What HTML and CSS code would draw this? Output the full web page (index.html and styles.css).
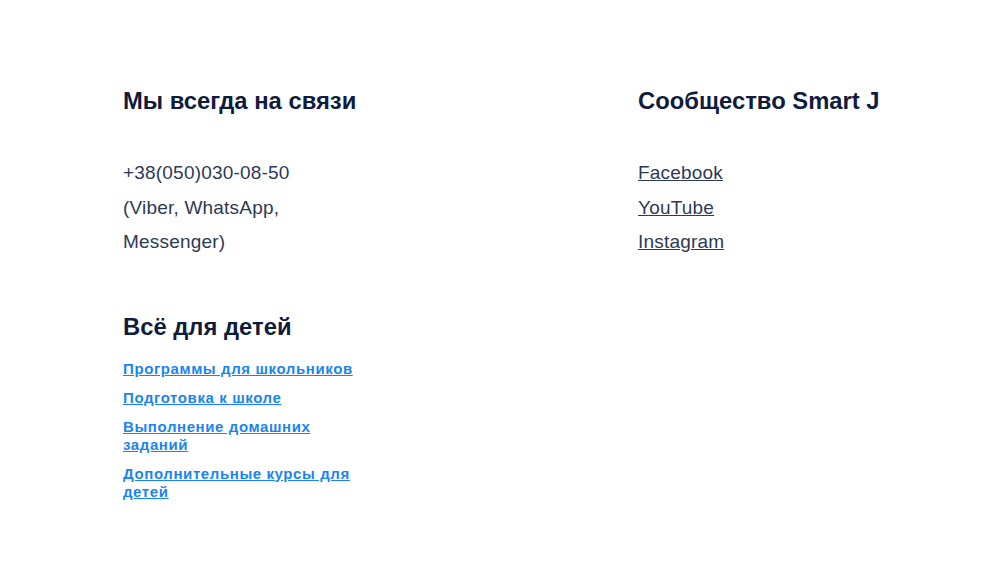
FILE: index.html
```html
<!DOCTYPE html>
<html lang="ru">
<head>
    <meta charset="UTF-8">
    <title>Контакты</title>
    <link rel="stylesheet" href="styles.css">
</head>
<body>
    <footer class="footer">
        <section class="footer-col">
            <h3 class="footer-title">Мы всегда на связи</h3>
            <p class="contact-text">+38(050)030-08-50<br>(Viber, WhatsApp, Messenger)</p>

            <h3 class="footer-title kids-title">Всё для детей</h3>
            <ul class="kids-links">
                <li><a href="#">Программы для школьников</a></li>
                <li><a href="#">Подготовка к школе</a></li>
                <li><a href="#">Выполнение домашних заданий</a></li>
                <li><a href="#">Дополнительные курсы для детей</a></li>
            </ul>
        </section>

        <section class="footer-col">
            <h3 class="footer-title">Сообщество Smart J</h3>
            <ul class="social-links">
                <li><a href="#">Facebook</a></li>
                <li><a href="#">YouTube</a></li>
                <li><a href="#">Instagram</a></li>
            </ul>
        </section>
    </footer>
</body>
</html>
```

FILE: styles.css
```css
/* Global */
body {
    margin: 0;
    background-color: #fff;
    font-family: 'Liberation Sans', Arial, sans-serif;
    color: #2d3a55;
}

.footer {
    display: flex;
    gap: 283px;
    padding: 87px 0 0 123px;
}

.footer-col {
    width: 232px;
}

.footer-title {
    margin: 0;
    font-size: 23.8px;
    line-height: 28px;
    font-weight: bold;
    color: #0f1c3d;
    white-space: nowrap;
}

.contact-text {
    margin: 41px 0 0;
    font-size: 19px;
    line-height: 34.5px;
    letter-spacing: 0.2px;
}

/* Kids links */
.kids-title {
    margin-top: 53px;
}

.kids-links {
    list-style: none;
    margin: 19px 0 0;
    padding: 0;
    display: flex;
    flex-direction: column;
    gap: 11px;
}

.kids-links li {
    font-size: 15px;
    line-height: 18px;
}

.kids-links a {
    color: #1a85f0;
    font-weight: bold;
    letter-spacing: 0.6px;
}

/* Social */
.social-links {
    list-style: none;
    margin: 41px 0 0;
    padding: 0;
}

.social-links li {
    font-size: 19px;
    line-height: 34.5px;
    letter-spacing: 0.2px;
}

.social-links a {
    color: #2d3a55;
}
```
